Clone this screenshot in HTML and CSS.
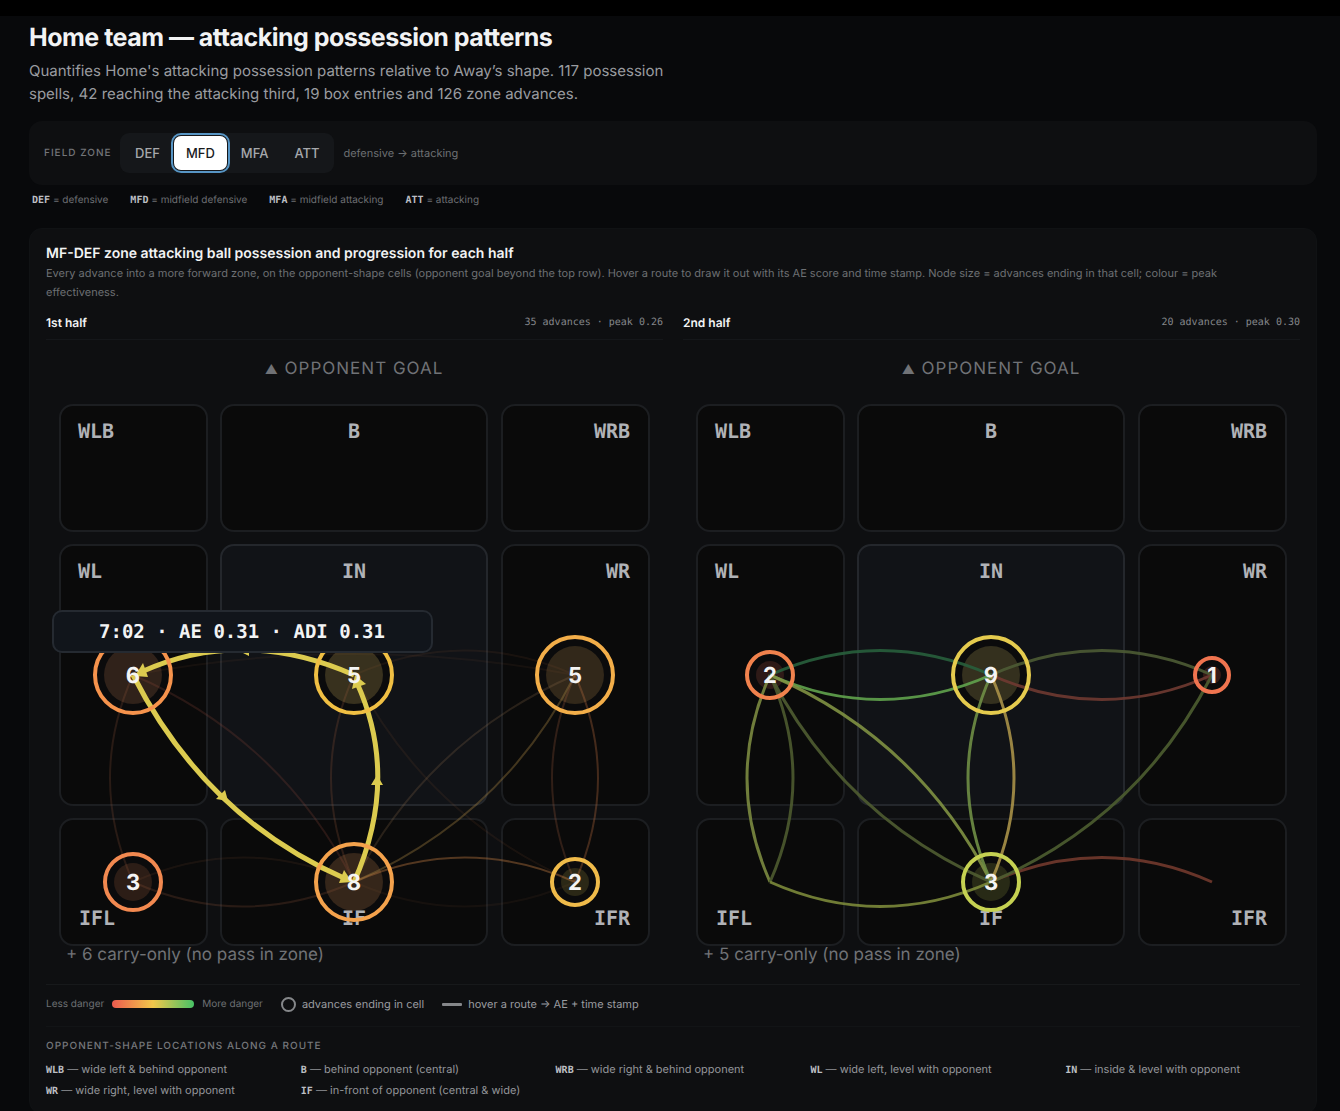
FILE: index.html
```html
<!DOCTYPE html>
<html lang="en">
<head>
<meta charset="utf-8">
<title>Home team — attacking possession patterns</title>
<link rel="stylesheet" href="styles.css">
</head>
<body>
<main class="page">
  <header class="intro">
    <h1>Home team — attacking possession patterns</h1>
    <p>Quantifies Home's attacking possession patterns relative to Away’s shape. 117 possession spells, 42 reaching the attacking third, 19 box entries and 126 zone advances.</p>
  </header>

  <section class="toolbar">
    <span class="toolbar-label" id="zone-label">Field zone</span>
    <div class="segments" role="group" aria-labelledby="zone-label">
      <button type="button">DEF</button>
      <button type="button" class="active" aria-pressed="true">MFD</button>
      <button type="button">MFA</button>
      <button type="button">ATT</button>
    </div>
    <span class="toolbar-hint">defensive → attacking</span>
  </section>
  <div class="zone-key">
    <span><b>DEF</b> = defensive</span>
    <span><b>MFD</b> = midfield defensive</span>
    <span><b>MFA</b> = midfield attacking</span>
    <span><b>ATT</b> = attacking</span>
  </div>

  <section class="panel">
    <h2>MF-DEF zone attacking ball possession and progression for each half</h2>
    <p class="desc">Every advance into a more forward zone, on the opponent-shape cells (opponent goal beyond the top row). Hover a route to draw it out with its AE score and time stamp. Node size = advances ending in that cell; colour = peak effectiveness.</p>

    <div class="halves">
      <article>
        <div class="half-head"><h3>1st half</h3><span>35 advances · peak 0.26</span></div>
        <svg class="pitch" viewBox="0 0 617 625" role="img" aria-label="First half routes">
          <text class="goal" x="308" y="29"><tspan class="marker">▲</tspan> OPPONENT GOAL</text>
          <g class="cells">
            <rect x="14" y="60" width="147" height="126" rx="13"/>
            <rect x="175" y="60" width="266" height="126" rx="13"/>
            <rect x="456" y="60" width="147" height="126" rx="13"/>
            <rect x="14" y="200" width="147" height="260" rx="13"/>
            <rect class="inside" x="175" y="200" width="266" height="260" rx="13"/>
            <rect x="456" y="200" width="147" height="260" rx="13"/>
            <rect x="14" y="474" width="147" height="126" rx="13"/>
            <rect x="175" y="474" width="266" height="126" rx="13"/>
            <rect x="456" y="474" width="147" height="126" rx="13"/>
          </g>
          <g class="halo">
            <circle cx="87" cy="330" r="37"/><circle cx="308" cy="330" r="37"/><circle cx="529" cy="330" r="37"/>
            <circle cx="87" cy="537" r="27"/><circle cx="308" cy="537" r="37"/><circle cx="529" cy="537" r="22"/>
          </g>
          <g>
            <circle cx="87" cy="330" r="29" fill="#30221a"/><circle cx="308" cy="330" r="29" fill="#38311e"/><circle cx="529" cy="330" r="29" fill="#32281a"/>
            <circle cx="87" cy="537" r="19" fill="#2c1d16"/><circle cx="308" cy="537" r="29" fill="#35261a"/><circle cx="529" cy="537" r="14" fill="#2b2816"/>
          </g>
          <g class="cell-names">
            <text x="32" y="93">WLB</text><text class="mid" x="308" y="93">B</text><text class="end" x="584" y="93">WRB</text>
            <text x="32" y="233">WL</text><text class="mid" x="308" y="233">IN</text><text class="end" x="584" y="233">WR</text>
            <text x="33" y="580">IFL</text><text class="mid" x="308" y="580">IF</text><text class="end" x="584" y="580">IFR</text>
          </g>
          <g class="routes">
            <path d="M87 330Q41 433 87 537" stroke="#a5603f" opacity=".2"/>
            <path d="M87 330Q235 394 308 537" stroke="#a5503f" opacity=".2"/>
            <path d="M308 330Q262 433 308 537" stroke="#a5603f" opacity=".22"/>
            <path d="M87 537Q197 488 308 537" stroke="#a5603f" opacity=".11"/>
            <path d="M87 537Q197 586 308 537" stroke="#a5603f" opacity=".2"/>
            <path d="M308 537Q419 488 529 537" stroke="#c07a42" opacity=".4"/>
            <path d="M308 537Q419 586 529 537" stroke="#a5603f" opacity=".08"/>
            <path d="M308 330Q419 281 529 330" stroke="#a5603f" opacity=".1"/>
            <path d="M87 330Q308 288 529 330" stroke="#a5603f" opacity=".08"/>
            <path d="M308 330Q382 473 529 537" stroke="#a5603f" opacity=".1"/>
            <path d="M529 330Q382 394 308 537" stroke="#9d7650" opacity=".22"/>
            <path d="M529 330Q456 473 308 537" stroke="#b08a45" opacity=".35"/>
            <path d="M529 330Q483 433 529 537" stroke="#b06542" opacity=".24"/>
            <path d="M529 330Q575 433 529 537" stroke="#c06f42" opacity=".32"/>
          </g>
          <g class="hovered">
            <path d="M87 330Q160 473 300 534"/>
            <path d="M308 537Q354 433 311 338"/>
            <path d="M308 330Q197 281 95 327"/>
            <polygon points="182,456 170,454 179,445"/>
            <polygon points="331,430 337,440 325,440"/>
            <polygon points="193,306 203,300 203,311"/>
            <polygon points="89,331 97,318 102,332"/>
            <polygon points="309,330 320,339 306,344"/>
            <polygon points="306,537 298,525 293,538"/>
          </g>
          <g class="rings">
            <circle cx="87" cy="330" r="38" stroke="#f6934c"/><circle cx="308" cy="330" r="38" stroke="#f0bf43"/><circle cx="529" cy="330" r="38" stroke="#f3ae49"/>
            <circle cx="87" cy="537" r="28" stroke="#f28950"/><circle cx="308" cy="537" r="38" stroke="#f4a24c"/><circle cx="529" cy="537" r="23" stroke="#f0bb4a"/>
          </g>
          <g class="counts">
            <text x="87" y="338">6</text><text x="308" y="338">5</text><text x="529" y="338">5</text>
            <text x="87" y="545">3</text><text x="308" y="545">8</text><text x="529" y="545">2</text>
          </g>
          <g class="tip">
            <rect x="7" y="266" width="379" height="41" rx="9"/>
            <text x="196" y="293">7:02 · AE 0.31 · ADI 0.31</text>
          </g>
          <text class="carry" x="20" y="615">+ 6 carry-only (no pass in zone)</text>
        </svg>
      </article>

      <article>
        <div class="half-head"><h3>2nd half</h3><span>20 advances · peak 0.30</span></div>
        <svg class="pitch" viewBox="0 0 617 625" role="img" aria-label="Second half routes">
          <text class="goal" x="308" y="29"><tspan class="marker">▲</tspan> OPPONENT GOAL</text>
          <g class="cells">
            <rect x="14" y="60" width="147" height="126" rx="13"/>
            <rect x="175" y="60" width="266" height="126" rx="13"/>
            <rect x="456" y="60" width="147" height="126" rx="13"/>
            <rect x="14" y="200" width="147" height="260" rx="13"/>
            <rect class="inside" x="175" y="200" width="266" height="260" rx="13"/>
            <rect x="456" y="200" width="147" height="260" rx="13"/>
            <rect x="14" y="474" width="147" height="126" rx="13"/>
            <rect x="175" y="474" width="266" height="126" rx="13"/>
            <rect x="456" y="474" width="147" height="126" rx="13"/>
          </g>
          <g class="halo">
            <circle cx="87" cy="330" r="22"/><circle cx="308" cy="330" r="37"/><circle cx="529" cy="330" r="17"/><circle cx="308" cy="537" r="27"/>
          </g>
          <g>
            <circle cx="87" cy="330" r="14" fill="#2e1a17"/><circle cx="308" cy="330" r="29" fill="#34301e"/><circle cx="529" cy="330" r="9" fill="#351b17"/><circle cx="308" cy="537" r="19" fill="#282a16"/>
          </g>
          <g class="cell-names">
            <text x="32" y="93">WLB</text><text class="mid" x="308" y="93">B</text><text class="end" x="584" y="93">WRB</text>
            <text x="32" y="233">WL</text><text class="mid" x="308" y="233">IN</text><text class="end" x="584" y="233">WR</text>
            <text x="33" y="580">IFL</text><text class="mid" x="308" y="580">IF</text><text class="end" x="584" y="580">IFR</text>
          </g>
          <g class="routes bright">
            <path d="M87 330Q197 281 308 330" stroke="#285f3c"/>
            <path d="M87 330Q197 379 308 330" stroke="#61a34c"/>
            <path d="M87 330Q235 394 308 537" stroke="#7f9143"/>
            <path d="M87 330Q161 473 308 537" stroke="#4f5c31"/>
            <path d="M87 330Q41 433 87 537" stroke="#7b8a40"/>
            <path d="M87 330Q133 433 87 537" stroke="#4d5a2f"/>
            <path d="M87 537Q197 586 308 537" stroke="#7b883a"/>
            <path d="M308 330Q262 433 308 537" stroke="#6f8e45"/>
            <path d="M308 330Q354 433 308 537" stroke="#a89148"/>
            <path d="M308 330Q419 281 529 330" stroke="#4c5b34"/>
            <path d="M308 330Q419 379 529 330" stroke="#6f3a31"/>
            <path d="M308 537Q419 488 529 537" stroke="#71382c"/>
            <path d="M529 330Q456 473 308 537" stroke="#4c5d30"/>
          </g>
          <g class="rings">
            <circle cx="87" cy="330" r="23" stroke="#f1824d"/><circle cx="308" cy="330" r="38" stroke="#e5cb4e"/><circle cx="529" cy="330" r="17" stroke="#f0744f"/><circle cx="308" cy="537" r="28" stroke="#c5d152"/>
          </g>
          <g class="counts">
            <text x="87" y="338">2</text><text x="308" y="338">9</text><text x="529" y="338">1</text><text x="308" y="545">3</text>
          </g>
          <text class="carry" x="20" y="615">+ 5 carry-only (no pass in zone)</text>
        </svg>
      </article>
    </div>

    <div class="legend">
      <div class="danger"><span>Less danger</span><i class="ramp"></i><span>More danger</span></div>
      <div class="legend-item"><i class="dot"></i>advances ending in cell</div>
      <div class="legend-item"><i class="dash"></i>hover a route → AE + time stamp</div>
    </div>

    <div class="locations">
      <h4>Opponent-shape locations along a route</h4>
      <div class="location-grid">
        <span><b>WLB</b> — wide left &amp; behind opponent</span>
        <span><b>B</b> — behind opponent (central)</span>
        <span><b>WRB</b> — wide right &amp; behind opponent</span>
        <span><b>WL</b> — wide left, level with opponent</span>
        <span><b>IN</b> — inside &amp; level with opponent</span>
        <span><b>WR</b> — wide right, level with opponent</span>
        <span><b>IF</b> — in-front of opponent (central &amp; wide)</span>
      </div>
    </div>
  </section>
</main>
</body>
</html>
```
FILE: styles.css
```css
* { box-sizing: border-box; }
body {
  margin: 0;
  background: #08090b;
  color: #f2f3f4;
  font: 11px/18px Inter, "Liberation Sans", sans-serif;
  text-rendering: geometricPrecision;
}
h1, h2, h3, h4, p { margin: 0; }
b { font: 700 10px/18px "DejaVu Sans Mono", monospace; color: #bdbfc3; }

.page {
  border-top: 16px solid #000;
  padding: 6px 23px 0 29px;
}
.intro h1 { font-size: 25px; line-height: 32px; font-weight: 700; letter-spacing: -0.5px; }
.intro p { max-width: 640px; margin-top: 5px; font-size: 15px; line-height: 23px; color: #9a9ca0; }

.toolbar {
  display: flex;
  align-items: center;
  margin-top: 16px;
  min-height: 64px;
  padding: 12px 15px;
  border-radius: 13px;
  background: #0e0f11;
}
.toolbar-label { width: 76px; font-size: 10px; font-weight: 500; letter-spacing: 1px; text-transform: uppercase; color: #737579; }
.segments { display: flex; gap: 2px; padding: 3px; border-radius: 9px; background: #15171a; }
.segments button {
  height: 34px;
  padding: 0 12px;
  border: 0;
  border-radius: 7px;
  background: none;
  font: 500 13px/18px Inter, sans-serif;
  color: #a6a8ac;
}
.segments .active { background: #fff; color: #1a1b1e; outline: 2px solid #5795c4; outline-offset: 1px; }
.toolbar-hint { margin-left: 9px; color: #6d6f73; }

.zone-key { display: flex; gap: 22px; margin-top: 6px; padding: 0 3px; font-size: 10px; color: #6d6f73; }

.panel {
  margin-top: 18px;
  padding: 15px 16px 12px;
  border: 1px solid #101214;
  border-radius: 13px;
  background: #0e0f11;
}
.panel h2 { font-size: 14px; line-height: 20px; font-weight: 600; }
.desc { padding-right: 12px; line-height: 19px; color: #6d6f73; }
.halves { display: grid; grid-template-columns: 1fr 1fr; gap: 20px; margin-top: 11px; }
.half-head {
  display: flex;
  justify-content: space-between;
  align-items: center;
  height: 27px;
  padding-bottom: 7px;
  border-bottom: 1px solid #15171a;
}
.half-head h3 { font-size: 12px; font-weight: 600; }
.half-head span { font: 10px/18px "DejaVu Sans Mono", monospace; color: #85878b; }

.pitch { display: block; width: 100%; height: auto; margin-top: 5px; }
.pitch text { font-family: Inter, sans-serif; font-size: 17px; }
.goal { text-anchor: middle; letter-spacing: 1px; fill: #707276; }
.marker { font-size: 13px; }
.carry { fill: #707276; }
.cells rect { fill: #0a0a0a; stroke: #1c1e21; stroke-width: 2; }
.cells .inside { fill: #111317; stroke: #24272c; }
.halo circle { fill: #0b0b0c; }
.pitch .cell-names text { font: 700 20px "DejaVu Sans Mono", monospace; fill: #b0b2b6; }
.mid { text-anchor: middle; }
.end { text-anchor: end; }
.routes path { fill: none; stroke-width: 2; }
.routes.bright path { stroke-width: 3; opacity: .9; }
.hovered path { fill: none; stroke: #dccb4f; stroke-width: 5; }
.hovered polygon { fill: #dccb4f; }
.rings circle { fill: none; stroke-width: 4; }
.pitch .counts text { font-size: 22px; font-weight: 700; text-anchor: middle; fill: #f4f4f4; }
.tip rect { fill: #11151b; stroke: #252a31; stroke-width: 2; }
.pitch .tip text { font: 700 19px "DejaVu Sans Mono", monospace; text-anchor: middle; fill: #f2f3f4; }

.legend {
  display: flex;
  align-items: center;
  gap: 18px;
  height: 42px;
  margin-top: 14px;
  padding-bottom: 3px;
  border-top: 1px solid #17191b;
  color: #9a9ca0;
}
.danger { display: flex; align-items: center; gap: 8px; font-size: 10px; color: #6d6f73; }
.ramp { width: 82px; height: 8px; border-radius: 4px; background: linear-gradient(90deg, #ec5a4e, #f2c84b 50%, #47c266); }
.legend-item { display: flex; align-items: center; gap: 6px; }
.dot { width: 15px; height: 15px; border: 2px solid #85878a; border-radius: 50%; }
.dash { width: 20px; height: 3px; border-radius: 1px; background: #85878a; }

.locations { padding-top: 10px; border-top: 1px solid #121416; }
.locations h4 { font-size: 10px; font-weight: 500; letter-spacing: 1px; text-transform: uppercase; color: #76787c; }
.location-grid {
  display: grid;
  grid-template-columns: repeat(5, 1fr);
  gap: 1px 20px;
  margin-top: 5px;
  color: #94969a;
}
```
